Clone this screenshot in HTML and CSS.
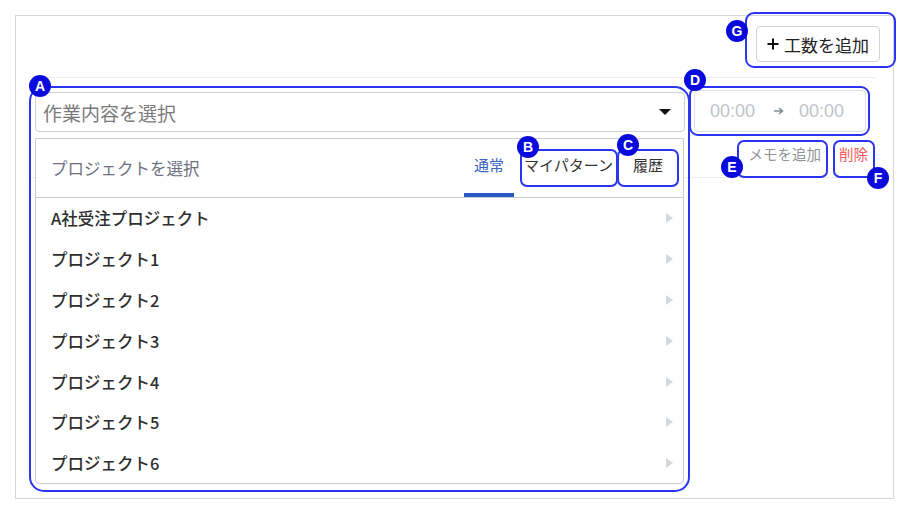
FILE: index.html
```html
<!DOCTYPE html>
<html lang="ja">
<head>
<meta charset="utf-8">
<title>工数入力</title>
<link rel="stylesheet" href="styles.css">
</head>
<body>
<div class="panel">
  <div class="toolbar">
    <button class="add-btn"><svg class="plus" viewBox="0 0 12 12" width="12" height="12"><path d="M6 0.5V11.5M0.5 6H11.5" stroke="#111" stroke-width="2"/></svg>工数を追加</button>
  </div>
  <div class="entries">
    <div class="entry">
      <div class="task-select">
        <div class="select-box">
          <span class="placeholder">作業内容を選択</span>
          <svg class="caret" viewBox="0 0 12 6" width="12" height="6"><path d="M0 0H12L6 6Z" fill="#111"/></svg>
        </div>
        <div class="dropdown">
          <div class="dd-head">
            <span class="dd-title">プロジェクトを選択</span>
            <div class="tabs">
              <span class="tab active">通常</span>
              <span class="tab">マイパターン</span>
              <span class="tab">履歴</span>
            </div>
          </div>
          <ul class="dd-list">
            <li class="dd-item"><span>A社受注プロジェクト</span><svg class="chev" viewBox="0 0 7 10" width="7" height="10"><path d="M0 0L7 5L0 10Z"/></svg></li>
            <li class="dd-item"><span>プロジェクト1</span><svg class="chev" viewBox="0 0 7 10" width="7" height="10"><path d="M0 0L7 5L0 10Z"/></svg></li>
            <li class="dd-item"><span>プロジェクト2</span><svg class="chev" viewBox="0 0 7 10" width="7" height="10"><path d="M0 0L7 5L0 10Z"/></svg></li>
            <li class="dd-item"><span>プロジェクト3</span><svg class="chev" viewBox="0 0 7 10" width="7" height="10"><path d="M0 0L7 5L0 10Z"/></svg></li>
            <li class="dd-item"><span>プロジェクト4</span><svg class="chev" viewBox="0 0 7 10" width="7" height="10"><path d="M0 0L7 5L0 10Z"/></svg></li>
            <li class="dd-item"><span>プロジェクト5</span><svg class="chev" viewBox="0 0 7 10" width="7" height="10"><path d="M0 0L7 5L0 10Z"/></svg></li>
            <li class="dd-item"><span>プロジェクト6</span><svg class="chev" viewBox="0 0 7 10" width="7" height="10"><path d="M0 0L7 5L0 10Z"/></svg></li>
          </ul>
        </div>
      </div>
      <div class="entry-side">
        <div class="time-range">
          <span class="time">00:00</span>
          <svg class="time-arrow" viewBox="0 0 10 8" width="10" height="8"><path d="M0 4H8M5 1L8.5 4L5 7" stroke="#8a8f99" stroke-width="1.6" fill="none"/></svg>
          <span class="time">00:00</span>
        </div>
        <div class="actions">
          <button class="link-btn memo">メモを追加</button>
          <button class="link-btn delete">削除</button>
        </div>
      </div>
    </div>
  </div>
</div>

<div class="note note-a"></div>
<div class="note note-b"></div>
<div class="note note-c"></div>
<div class="note note-d"></div>
<div class="note note-e"></div>
<div class="note note-f"></div>
<div class="note note-g"></div>
<span class="badge badge-a">A</span>
<span class="badge badge-b">B</span>
<span class="badge badge-c">C</span>
<span class="badge badge-d">D</span>
<span class="badge badge-e">E</span>
<span class="badge badge-f">F</span>
<span class="badge badge-g">G</span>
</body>
</html>
```

FILE: styles.css
```css
* { box-sizing: border-box; }
html, body { margin: 0; padding: 0; background: #fff; }
body {
  position: relative;
  width: 916px;
  height: 517px;
  font-family: "Liberation Sans", "Noto Sans CJK JP", sans-serif;
  color: #333;
  overflow: hidden;
}
button { font-family: inherit; }

.panel {
  margin: 15px 0 0 15px;
  width: 879px;
  height: 484px;
  border: 1px solid #d6d6d6;
}

.toolbar {
  display: flex;
  justify-content: flex-end;
  padding: 10px 13px 15px 0;
}
.add-btn {
  display: flex;
  align-items: center;
  justify-content: center;
  gap: 5px;
  width: 124px;
  height: 36px;
  background: #fff;
  border: 1px solid #d3d3d3;
  border-radius: 4px;
  font-size: 17px;
  color: #222;
  padding: 0;
}
.plus { display: block; }

.entries {
  margin: 0 17px 0 14px;
  border-top: 1px solid #ededed;
}
.entry {
  display: flex;
  align-items: flex-start;
  gap: 9px;
  padding: 12px 10px 12px 5px;
  border-bottom: 1px solid #ededed;
}

.task-select {
  position: relative;
  width: 650px;
  margin-top: 2px;
}
.select-box {
  display: flex;
  align-items: center;
  justify-content: space-between;
  height: 40px;
  padding: 0 13px 0 7px;
  border: 1px solid #cdd1d8;
  border-radius: 4px;
}
.placeholder { font-size: 19px; color: #7a7a7a; }
.caret { display: block; }

.dropdown {
  position: absolute;
  top: 46px;
  left: 0;
  width: 649px;
  height: 346px;
  background: #fff;
  border: 1px solid #c8cdd5;
  border-radius: 0 0 4px 4px;
  z-index: 2;
}
.dd-head {
  display: flex;
  align-items: stretch;
  justify-content: space-between;
  height: 59px;
  padding: 0 10px 0 15px;
  border-bottom: 1px solid #c8cdd5;
}
.dd-title {
  align-self: center;
  font-size: 16.5px;
  color: #6c7280;
  margin-top: -1px;
}
.tabs { display: flex; align-items: stretch; }
.tab {
  display: flex;
  align-items: center;
  padding: 0 10px 3px;
  font-size: 15px;
  color: #333;
  border-bottom: 4px solid transparent;
}
.tab.active { color: #3a63c2; border-bottom-color: #2c58c2; }

.dd-list { list-style: none; margin: 0; padding: 0; }
.dd-item {
  display: flex;
  align-items: center;
  justify-content: space-between;
  height: 40.8px;
  padding: 0 10px 0 15px;
  font-family: "Noto Sans CJK JP", sans-serif;
  font-size: 16.5px;
  font-weight: 500;
  color: #2e2e2e;
}
.chev { display: block; fill: #d3d7dd; }

.entry-side { width: 172px; }
.time-range {
  display: flex;
  align-items: center;
  height: 42px;
  padding: 0 0 0 15px;
  border: 1px solid #dcdfe4;
  border-radius: 4px;
}
.time { font-size: 18px; color: #c0c4cc; }
.time-arrow { display: block; margin: 0 15px 0 19px; }

.actions {
  display: flex;
  justify-content: flex-end;
  margin: 13px -6px 0 0;
}
.link-btn {
  background: none;
  border: none;
  height: 20px;
  line-height: 20px;
  font-size: 14.5px;
  padding: 0 4px 0 10px;
}
.memo { color: #909399; padding-right: 8px; }
.delete { color: #f4595c; }

/* annotation overlays */
.note {
  position: absolute;
  border: 2px solid #2a35f2;
  border-radius: 7px;
  z-index: 5;
}
.note-a { left: 29px; top: 86px; width: 661px; height: 406px; border-radius: 15px; }
.note-b { left: 520px; top: 149px; width: 98px; height: 38px; }
.note-c { left: 617px; top: 149px; width: 62px; height: 38px; }
.note-d { left: 689px; top: 86px; width: 181px; height: 50px; border-radius: 9px; }
.note-e { left: 737px; top: 140px; width: 91px; height: 38px; }
.note-f { left: 833px; top: 140px; width: 42px; height: 38px; }
.note-g { left: 745px; top: 12px; width: 151px; height: 56px; border-radius: 9px; }

.badge {
  position: absolute;
  width: 22px;
  height: 22px;
  margin: -11px 0 0 -11px;
  border-radius: 50%;
  background: #0a0adc;
  color: #fff;
  font-family: "Liberation Sans", sans-serif;
  font-weight: 700;
  font-size: 14px;
  line-height: 22px;
  text-align: center;
  z-index: 6;
}
.badge-a { left: 40px; top: 86px; }
.badge-b { left: 528px; top: 147px; }
.badge-c { left: 628px; top: 145px; }
.badge-d { left: 695px; top: 80px; }
.badge-e { left: 732px; top: 167px; }
.badge-f { left: 878px; top: 178px; }
.badge-g { left: 737px; top: 31px; }
```
